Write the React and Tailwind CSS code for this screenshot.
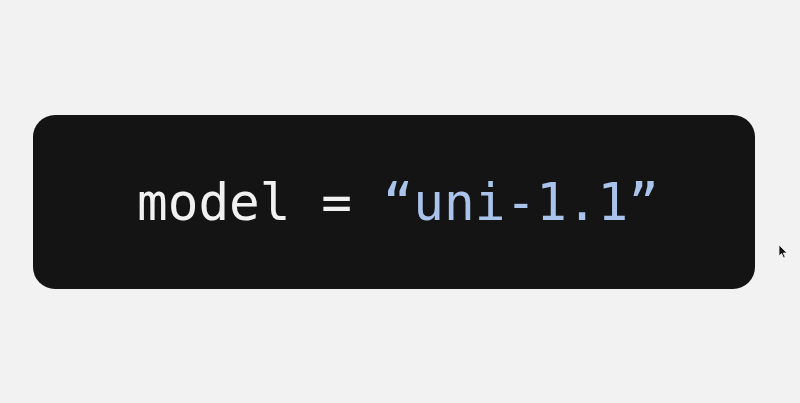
import React from 'react';

function Cursor() {
  return (
    <svg className="absolute left-[778px] top-[244px]" width="10" height="15" viewBox="0 0 10 15">
      <path d="M1 1 L1 12 L3.6 9.6 L5.6 14 L7.2 13.3 L5.3 9 L9 9 Z" fill="#111" stroke="#eee" strokeWidth="0.8" />
    </svg>
  );
}

export default function App() {
  return (
    <div className="relative h-[403px] w-[800px] bg-[#f2f2f2] flex items-center pl-[33px]">
      <div className="w-[722px] h-[174px] rounded-[22px] bg-[#141414] flex items-center justify-center">
        <div
          className="text-[51px] leading-none text-[#f1f1f1] whitespace-pre pl-[8px] pt-[1px]"
          style={{ fontFamily: '"DejaVu Sans Mono", "Liberation Mono", monospace' }}
        >
          model = <span className="text-[#a9c3ea]">“uni-1.1”</span>
        </div>
      </div>
      <Cursor />
    </div>
  );
}
